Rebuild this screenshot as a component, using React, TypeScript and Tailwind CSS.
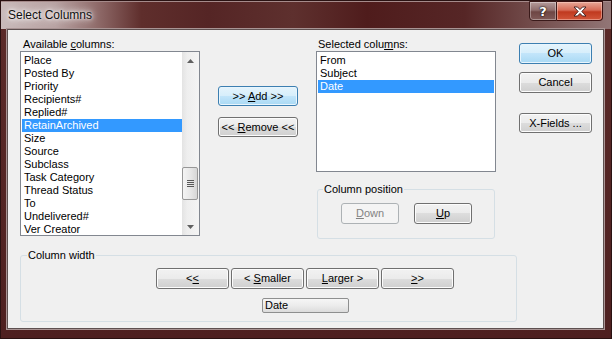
import React from "react";

type BtnKind = "normal" | "default" | "disabled";

const btnStyles: Record<BtnKind, string> = {
  normal:
    "border-[#707070] text-black bg-[linear-gradient(180deg,#f2f2f2_0%,#ebebeb_50%,#dddddd_50%,#cfcfcf_100%)] shadow-[inset_0_0_0_1px_#fcfcfc]",
  default:
    "border-[#3c7fb1] text-black bg-[linear-gradient(180deg,#e5f4fc_0%,#d6eefb_50%,#c2e5fa_50%,#a9d9f4_100%)] shadow-[inset_0_0_0_1px_#e8f5fd]",
  disabled: "border-[#adb2b5] text-[#838383] bg-[#f4f4f4]",
};

function Btn({
  kind = "normal",
  className = "",
  children,
}: {
  kind?: BtnKind;
  className?: string;
  children: React.ReactNode;
}) {
  return (
    <div
      className={`flex items-center justify-center rounded-[3px] border leading-[13px] ${btnStyles[kind]} ${className}`}
    >
      <span className="whitespace-pre">{children}</span>
    </div>
  );
}

function Key({ children }: { children: React.ReactNode }) {
  return <span className="underline underline-offset-[1px]">{children}</span>;
}

function Row({ label, selected }: { label: string; selected?: boolean }) {
  return (
    <div
      className={`h-[13px] pl-[2px] leading-[13px] whitespace-nowrap ${
        selected ? "bg-[#3399ff] text-white" : "text-black"
      }`}
    >
      {label}
    </div>
  );
}

const available = [
  "Place",
  "Posted By",
  "Priority",
  "Recipients#",
  "Replied#",
  "RetainArchived",
  "Size",
  "Source",
  "Subclass",
  "Task Category",
  "Thread Status",
  "To",
  "Undelivered#",
  "Ver Creator",
];

const selectedCols = ["From", "Subject", "Date"];

function ScrollBar() {
  return (
    <div className="flex w-[17px] shrink-0 flex-col bg-[linear-gradient(90deg,#e3e3e3_0%,#eeeeee_30%,#f4f4f4_100%)]">
      <div className="flex h-[17px] items-center justify-center">
        <svg width="7" height="4" viewBox="0 0 7 4">
          <path d="M3.5 0 L7 4 L0 4 Z" fill="#606060" />
        </svg>
      </div>
      <div className="flex-1 pt-[98px]">
        <div className="mr-[1px] flex h-[33px] flex-col items-center justify-center gap-[1px] rounded-[2px] border border-[#979797] bg-[linear-gradient(90deg,#f4f4f4_0%,#e8e8e8_50%,#d6d6d6_100%)]">
          <div className="h-px w-[7px] bg-[#585858]" />
          <div className="h-px w-[7px] bg-[#585858]" />
          <div className="h-px w-[7px] bg-[#585858]" />
          <div className="h-px w-[7px] bg-[#585858]" />
        </div>
      </div>
      <div className="flex h-[17px] items-center justify-center">
        <svg width="7" height="4" viewBox="0 0 7 4">
          <path d="M0 0 L7 0 L3.5 4 Z" fill="#606060" />
        </svg>
      </div>
    </div>
  );
}

export default function App() {
  return (
    <div className="flex h-[339px] w-[612px] flex-col overflow-hidden border border-[#2a1212] bg-[linear-gradient(180deg,#5c2b29_0%,#4e2020_100%)] font-['Liberation_Sans',Arial,sans-serif] text-[11px]">
      {/* title bar */}
      <div className="flex h-[28px] shrink-0 items-start border-t border-[#a58a8a] bg-[linear-gradient(90deg,#c9baba_0%,#b8a2a2_9%,#8e6968_16%,#5f2e2c_23%,#552525_34%,#5e302e_48%,#4f1c1c_60%,#562626_76%,#7a5655_90%,#927676_100%)]">
        <div className="pl-[7px] pt-[6px] text-[12px] leading-[15px] text-[#101010] [text-shadow:0_0_6px_#ffffff,0_0_10px_#ffffff,0_0_3px_#ffffff]">
          Select Columns
        </div>
        <div className="ml-auto mr-[8px] flex -mt-px">
          <div className="flex h-[20px] w-[28px] items-center justify-center rounded-bl-[4px] border border-[#3a1a1a] bg-[linear-gradient(180deg,#b59b9b_0%,#8f6e6d_45%,#6e4644_55%,#805a58_100%)] shadow-[inset_0_0_0_1px_rgba(255,255,255,0.35)]">
            <span className="font-['DejaVu_Sans',sans-serif] text-[13px] font-bold leading-none text-white [text-shadow:0_0_2px_#000,0_0_1px_#000]">
              ?
            </span>
          </div>
          <div className="flex h-[20px] w-[46px] items-center justify-center rounded-br-[4px] border border-l-0 border-[#3a1010] bg-[linear-gradient(180deg,#e8a797_0%,#d66a55_45%,#c0391f_55%,#d2563a_100%)] shadow-[inset_0_0_0_1px_rgba(255,220,210,0.45)]">
            <svg width="14" height="11" viewBox="0 0 14 11">
              <path
                d="M1 1 H4.5 L7 3.6 L9.5 1 H13 L8.8 5.5 L13 10 H9.5 L7 7.4 L4.5 10 H1 L5.2 5.5 Z"
                fill="#ffffff"
                stroke="#3a1a1a"
                strokeWidth="0.9"
                strokeLinejoin="round"
              />
            </svg>
          </div>
        </div>
      </div>

      {/* window body */}
      <div className="flex flex-1 pl-[6px] pr-[7px] pb-[9px]">
        <div className="flex flex-1 flex-col border border-[#5e5050] bg-[#f0f0f0] text-black shadow-[0_0_0_1px_#a99494]">
          {/* top row */}
          <div className="flex items-start">
            {/* available */}
            <div className="ml-[12px] w-[180px]">
              <div className="mt-[8px] h-[13px] pl-[3px] leading-[13px]">
                Available <Key>c</Key>olumns:
              </div>
              <div className="flex h-[185px] border border-[#828790] bg-white">
                <div className="flex-1 pt-[2px] pl-px">
                  {available.map((c) => (
                    <Row key={c} label={c} selected={c === "RetainArchived"} />
                  ))}
                </div>
                <ScrollBar />
              </div>
            </div>

            {/* add / remove */}
            <div className="ml-[18px] flex w-[80px] flex-col">
              <Btn kind="default" className="mt-[56px] h-[20px]">
                &gt;&gt; <Key>A</Key>dd &gt;&gt;
              </Btn>
              <Btn className="mt-[11px] h-[20px]">
                &lt;&lt; <Key>R</Key>emove &lt;&lt;
              </Btn>
            </div>

            {/* selected */}
            <div className="ml-[18px] w-[180px]">
              <div className="mt-[8px] h-[13px] pl-[2px] leading-[13px]">
                Selected colu<Key>m</Key>ns:
              </div>
              <div className="h-[121px] border border-[#828790] bg-white px-px pt-[2px]">
                {selectedCols.map((c) => (
                  <Row key={c} label={c} selected={c === "Date"} />
                ))}
              </div>
              <fieldset className="mt-[11px] ml-px h-[56px] w-[178px] rounded-[3px] border border-[#d5dfe5]">
                <legend className="ml-[5px] px-px leading-[13px]">Column position</legend>
                <div className="mt-[7px] ml-[23px] flex gap-[15px]">
                  <Btn kind="disabled" className="h-[21px] w-[58px]">
                    <Key>D</Key>own
                  </Btn>
                  <Btn className="h-[21px] w-[58px]">
                    <Key>U</Key>p
                  </Btn>
                </div>
              </fieldset>
            </div>

            {/* ok / cancel */}
            <div className="ml-[23px] flex w-[73px] flex-col">
              <Btn kind="default" className="mt-[13px] h-[21px]">
                OK
              </Btn>
              <Btn className="mt-[8px] h-[21px]">Cancel</Btn>
              <Btn className="mt-[20px] h-[20px]">X-Fields ...</Btn>
            </div>
          </div>

          {/* column width */}
          <fieldset className="mt-[10px] ml-[12px] h-[73px] w-[497px] rounded-[3px] border border-[#d5dfe5]">
            <legend className="ml-[6px] px-px leading-[13px]">Column width</legend>
            <div className="mt-[6px] ml-[135px] flex gap-[2px]">
              <Btn className="h-[21px] w-[73px]">
                &lt;<Key>&lt;</Key>
              </Btn>
              <Btn className="h-[21px] w-[73px]">
                &lt; <Key>S</Key>maller
              </Btn>
              <Btn className="h-[21px] w-[73px]">
                <Key>L</Key>arger &gt;
              </Btn>
              <Btn className="h-[21px] w-[73px]">
                <Key>&gt;</Key>&gt;
              </Btn>
            </div>
            <div className="mt-[9px] ml-[241px] flex h-[15px] w-[87px] items-center rounded-[2px] border border-[#8e8f8f] bg-[linear-gradient(180deg,#f6f6f6_0%,#ececec_50%,#dcdcdc_100%)] pl-[2px] leading-[13px]">
              Date
            </div>
          </fieldset>
        </div>
      </div>
    </div>
  );
}
